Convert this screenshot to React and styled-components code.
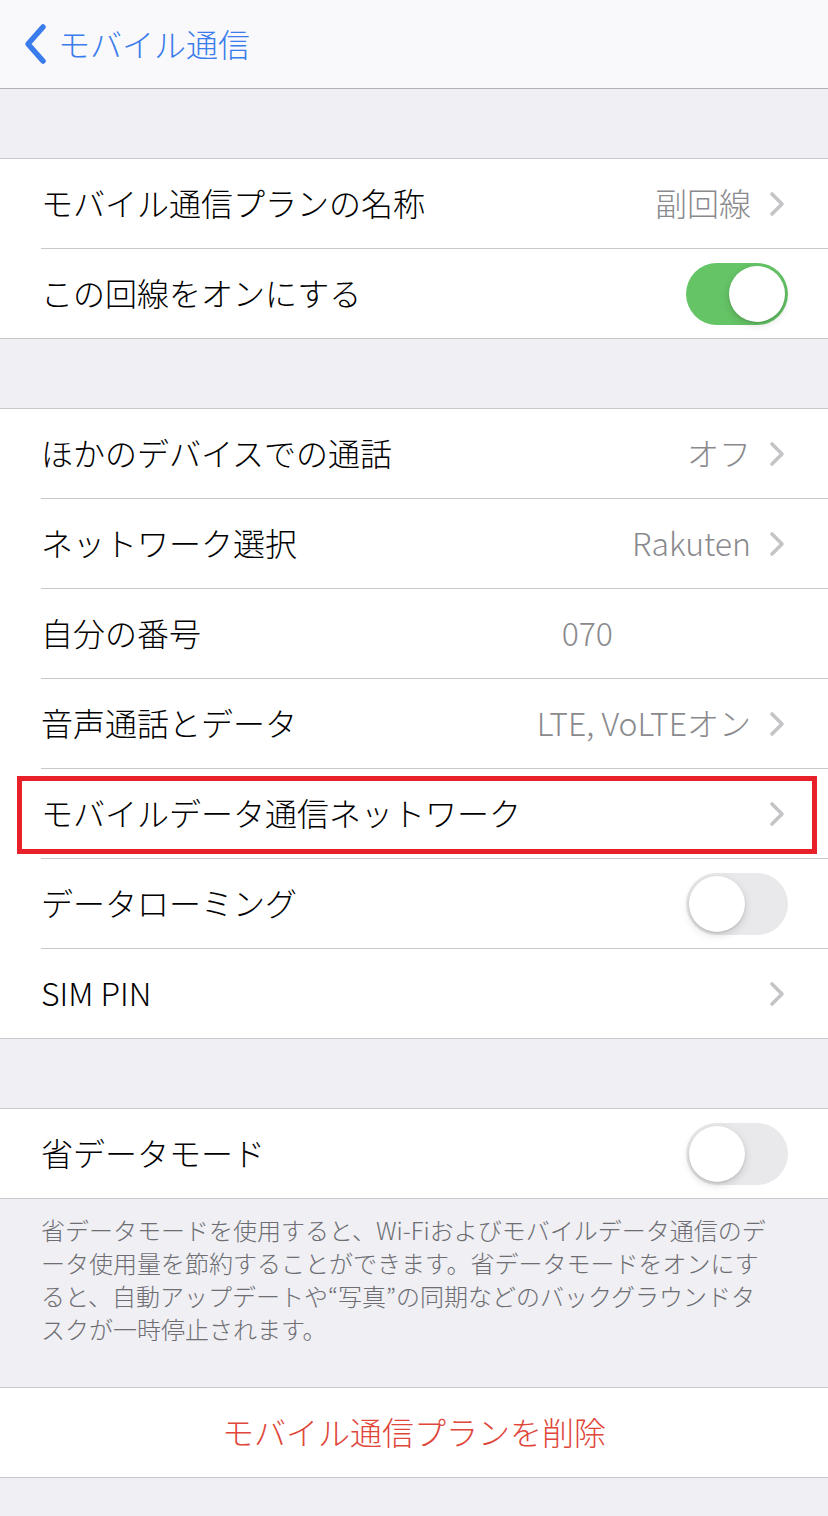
import React from 'react';
import styled, { createGlobalStyle } from 'styled-components';

const GlobalStyle = createGlobalStyle`
  html, body {
    margin: 0;
    padding: 0;
    background-color: #efeff4;
  }
  body {
    font-family: "Noto Sans CJK JP", "Noto Sans", sans-serif;
    -webkit-font-smoothing: antialiased;
  }
`;

const footerLines = [
  '省データモードを使用すると、Wi-Fiおよびモバイルデータ通信のデ',
  'ータ使用量を節約することができます。省データモードをオンにす',
  'ると、自動アップデートや“写真”の同期などのバックグラウンドタ',
  'スクが一時停止されます。',
];

const Chevron = () => (
  <ChevronIcon width="16" height="26" viewBox="0 0 16 26">
    <path d="M3 3 L13 13 L3 23" fill="none" stroke="#c4c4c7" strokeWidth="3.6" strokeLinecap="round" strokeLinejoin="round" />
  </ChevronIcon>
);

const SettingRow = ({ label, value, chevron, toggle, valueOffset, highlight }) => (
  <Row>
    <Inner>
      <Label>{label}</Label>
      {value && <Value offset={valueOffset}>{value}</Value>}
      {chevron && <Chevron />}
      {toggle !== undefined && (
        <Switch on={toggle}>
          <Knob on={toggle} />
        </Switch>
      )}
    </Inner>
    {highlight && <Highlight />}
  </Row>
);

const App = () => {
  return (
    <Page>
      <GlobalStyle />
      <NavBar>
        <BackButton>
          <svg width="30" height="44" viewBox="0 0 30 44">
            <path d="M21 5 L6 22 L21 39" fill="none" stroke="#3a7cec" strokeWidth="5.5" strokeLinecap="round" strokeLinejoin="round" />
          </svg>
          <BackLabel>モバイル通信</BackLabel>
        </BackButton>
      </NavBar>

      <Group>
        <SettingRow label="モバイル通信プランの名称" value="副回線" chevron />
        <SettingRow label="この回線をオンにする" toggle={true} />
      </Group>

      <Group>
        <SettingRow label="ほかのデバイスでの通話" value="オフ" chevron />
        <SettingRow label="ネットワーク選択" value="Rakuten" chevron />
        <SettingRow label="自分の番号" value="070" valueOffset={175} />
        <SettingRow label="音声通話とデータ" value="LTE, VoLTEオン" chevron />
        <SettingRow label="モバイルデータ通信ネットワーク" chevron highlight />
        <SettingRow label="データローミング" toggle={false} />
        <SettingRow label="SIM PIN" chevron />
      </Group>

      <Group>
        <SettingRow label="省データモード" toggle={false} />
      </Group>

      <Footer>
        {footerLines.map((line, i) => (
          <FooterLine key={i}>{line}</FooterLine>
        ))}
      </Footer>

      <Group flush>
        <DeleteRow>モバイル通信プランを削除</DeleteRow>
      </Group>
    </Page>
  );
};

const Page = styled.div`
  width: 828px;
  min-height: 1516px;
  background-color: #efeff4;
  display: flex;
  flex-direction: column;
`;

const NavBar = styled.div`
  height: 88px;
  background-color: #f9f9fb;
  border-bottom: 1px solid #b2b2b2;
  display: flex;
  align-items: center;
  padding-left: 22px;
`;

const BackButton = styled.div`
  display: flex;
  align-items: center;
  gap: 6px;
  color: #3a7cec;
`;

const BackLabel = styled.span`
  font-size: 32px;
  font-weight: 300;
  line-height: 1;
  margin-top: -2px;
`;

const Group = styled.div`
  margin-top: ${(p) => (p.flush ? '0' : '69px')};
  background-color: #ffffff;
  border-top: 1px solid #c8c7cc;
  border-bottom: 1px solid #c8c7cc;
`;

const Row = styled.div`
  position: relative;
  padding-left: 41px;

  &:not(:last-child) > div:first-child {
    border-bottom: 1px solid #c8c7cc;
  }
`;

const Inner = styled.div`
  height: 89px;
  display: flex;
  align-items: center;
  padding-right: 40px;
`;

const Label = styled.span`
  flex: 1;
  font-size: 32px;
  font-weight: 300;
  color: #000000;
  line-height: 1;
  margin-top: -3px;
  white-space: nowrap;
`;

const Value = styled.span`
  font-size: 32px;
  font-weight: 300;
  color: #8a8a8e;
  line-height: 1;
  margin-top: -3px;
  margin-right: ${(p) => (p.offset ? `${p.offset}px` : '0')};
`;

const ChevronIcon = styled.svg`
  margin-left: 18px;
  margin-right: 3px;
  flex-shrink: 0;
`;

const Switch = styled.div`
  width: 102px;
  height: 62px;
  border-radius: 31px;
  box-sizing: border-box;
  background-color: ${(p) => (p.on ? '#65c466' : '#e9e9eb')};
  position: relative;
  flex-shrink: 0;
`;

const Knob = styled.div`
  position: absolute;
  top: 3px;
  left: ${(p) => (p.on ? '43px' : '3px')};
  width: 56px;
  height: 56px;
  border-radius: 50%;
  background-color: #ffffff;
  box-shadow: 0 3px 8px rgba(0, 0, 0, 0.15), 0 1px 2px rgba(0, 0, 0, 0.12);
`;

const Highlight = styled.div`
  position: absolute;
  top: 7px;
  left: 17px;
  right: 11px;
  height: 78px;
  box-sizing: border-box;
  border: 5px solid #e8202a;
  pointer-events: none;
`;

const Footer = styled.div`
  padding: 14px 41px 42px;
  color: #6d6d72;
  font-size: 24px;
  font-weight: 300;
  line-height: 33px;
`;

const FooterLine = styled.div`
  white-space: nowrap;
`;

const DeleteRow = styled.div`
  height: 89px;
  display: flex;
  align-items: center;
  justify-content: center;
  font-size: 32px;
  font-weight: 300;
  color: #e0463a;
  padding-bottom: 3px;
  box-sizing: border-box;
`;

export default App;
